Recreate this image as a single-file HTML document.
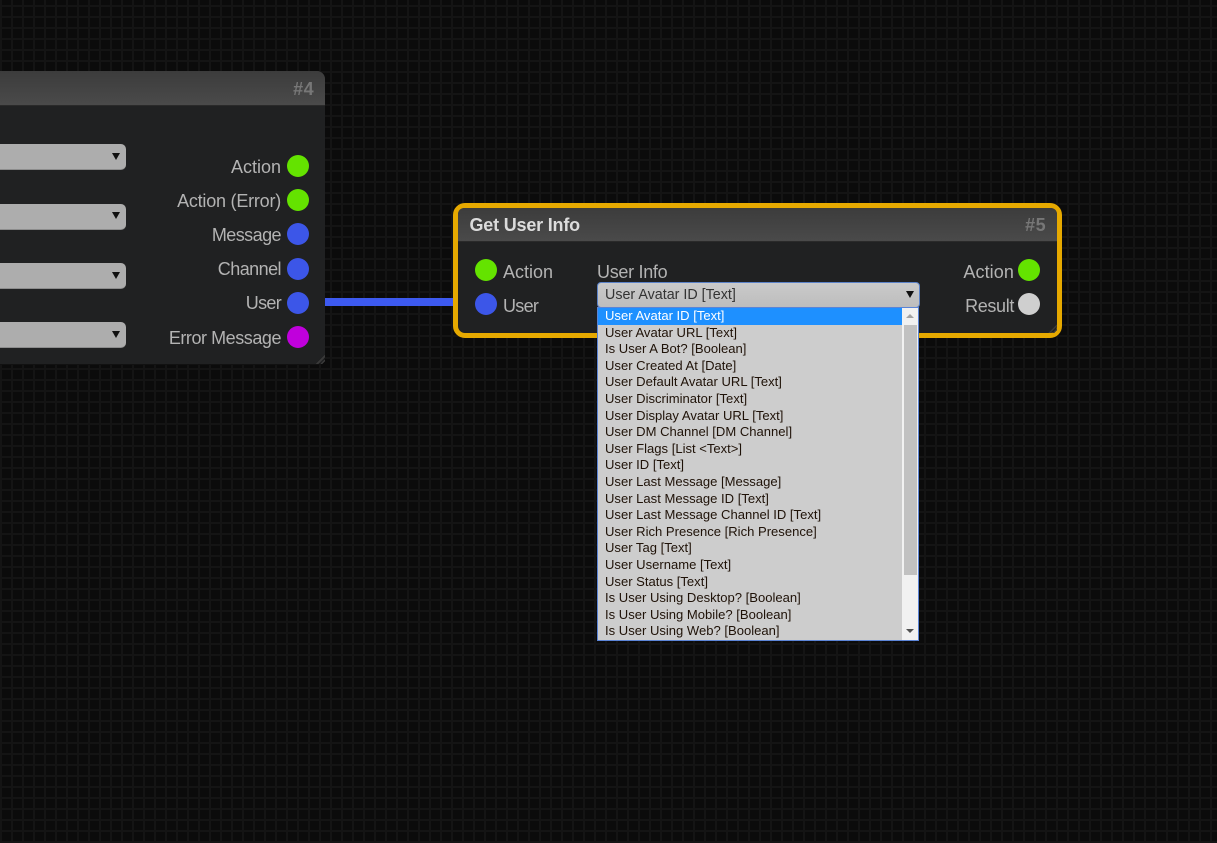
<!DOCTYPE html>
<html><head><meta charset="utf-8"><style>
*{box-sizing:border-box}
html,body{margin:0;padding:0;width:1217px;height:843px;overflow:hidden;background:#0b0b0b}
body{position:relative;font-family:"Liberation Sans",Arial,sans-serif;
background-color:#0b0b0b;
background-image:linear-gradient(90deg,#141414 2px,transparent 2px),linear-gradient(#141414 2px,transparent 2px);
background-size:11px 11px;background-position:0 5px}
.a{position:absolute}
.node{background:#202122;position:absolute}
.hdr{position:absolute;left:0;right:0;top:0;background:linear-gradient(#3c3c3c,#4a4a4a);border-bottom:1px solid #2a2a2a}
.id{position:absolute;font-weight:bold;font-size:18px;color:#777;line-height:20px;letter-spacing:.4px}
.lbl{position:absolute;font-size:18px;color:#b3b3b3;line-height:22px;white-space:nowrap}
.r{text-align:right}
.p{position:absolute;width:22px;height:22px;border-radius:50%}
.g{background:#64e300}.b{background:#3c56e8}.m{background:#c000dc}.w{background:#cfcfcf}
.sel{position:absolute;left:-10px;width:136px;height:26px;background:#adadad;border-bottom:1px solid #8c8c8c;border-radius:0 5px 5px 0}
.arr{position:absolute;width:0;height:0;border-left:4px solid transparent;border-right:4px solid transparent;border-top:7px solid #111}
.it{position:absolute;left:7px;font-size:13.05px;line-height:17px;color:#1f1208;white-space:nowrap}
.grip{position:absolute;width:9px;height:9px;background:linear-gradient(135deg,transparent 50%,#3a3a3a 50%,#3a3a3a 62%,transparent 62%,transparent 74%,#3a3a3a 74%,#3a3a3a 86%,transparent 86%)}
</style></head><body>

<div class="a" style="left:320px;top:298px;width:140px;height:8px;background:#3d5af0"></div>

<div class="node" style="left:-20px;top:71px;width:345px;height:293px;border-radius:0 8px 8px 0;box-shadow:0 1px 0 #111">
 <div class="hdr" style="height:35px;border-radius:0 8px 0 0"></div>
 <div class="id" style="right:11px;top:8px">#4</div>
 <div class="grip" style="right:0;bottom:0"></div>
</div>
<div class="sel" style="top:144px"><div class="arr" style="left:122px;top:9px"></div></div>
<div class="sel" style="top:204px"><div class="arr" style="left:122px;top:8px"></div></div>
<div class="sel" style="top:263px"><div class="arr" style="left:122px;top:9px"></div></div>
<div class="sel" style="top:322px"><div class="arr" style="left:122px;top:9px"></div></div>

<div class="lbl r" style="right:936px;top:156px">Action</div>
<div class="lbl r" style="right:936px;top:190px;letter-spacing:-.22px">Action (Error)</div>
<div class="lbl r" style="right:936px;top:224px;letter-spacing:-.55px">Message</div>
<div class="lbl r" style="right:936px;top:258px;letter-spacing:-.55px">Channel</div>
<div class="lbl r" style="right:936px;top:292px;letter-spacing:-.7px">User</div>
<div class="lbl r" style="right:936px;top:327px;letter-spacing:-.45px">Error Message</div>
<div class="p g" style="left:287px;top:155px"></div>
<div class="p g" style="left:287px;top:189px"></div>
<div class="p b" style="left:287px;top:223px"></div>
<div class="p b" style="left:287px;top:258px"></div>
<div class="p b" style="left:287px;top:292px"></div>
<div class="p m" style="left:287px;top:326px"></div>

<div class="node" style="left:453px;top:203px;width:609px;height:135px;border:5.5px solid #e6a900;border-radius:12px;background:#202122">
 <div class="hdr" style="height:34px;border-radius:6px 6px 0 0"></div>
 <div class="a" style="left:11.5px;top:7px;font-weight:bold;font-size:18px;line-height:20px;color:#dcdcdc;letter-spacing:-.2px">Get User Info</div>
 <div class="id" style="right:11px;top:7px">#5</div>
 <div class="grip" style="right:0;bottom:0"></div>
</div>
<div class="p g" style="left:475px;top:259px"></div>
<div class="p b" style="left:475px;top:293px"></div>
<div class="lbl" style="left:503px;top:261px">Action</div>
<div class="lbl" style="left:503px;top:295px;letter-spacing:-.7px">User</div>
<div class="lbl" style="left:597px;top:261px;letter-spacing:-.3px">User Info</div>
<div class="lbl r" style="right:203px;top:261px;letter-spacing:.1px">Action</div>
<div class="lbl r" style="right:203px;top:295px;letter-spacing:-.35px">Result</div>
<div class="p g" style="left:1018px;top:259px"></div>
<div class="p w" style="left:1018px;top:293px"></div>

<div class="a" style="left:597px;top:282px;width:323px;height:26px;background:linear-gradient(#cacaca,#bdbdbd);border:1px solid #5b82c8;border-radius:4px;font-size:14.3px;line-height:24px;color:#333;padding-left:7px">User Avatar ID [Text]<div class="arr" style="left:308px;top:8px"></div></div>

<div class="a" style="left:597px;top:307px;width:322px;height:334px;background:#cdcdcd;border:1px solid #5b84d6">
 <div class="a" style="left:0;top:0;width:304px;height:17px;background:#1e90ff"></div>
 <div class="a" style="left:304px;top:0;width:16px;height:332px;background:#f1f1f1">
  <div class="a" style="left:2px;top:17px;width:13px;height:250px;background:#c1c1c1"></div>
  <div class="a" style="left:4px;top:6px;width:0;height:0;border-left:4px solid transparent;border-right:4px solid transparent;border-bottom:4px solid #a3a3a3"></div>
  <div class="a" style="left:4px;top:321px;width:0;height:0;border-left:4px solid transparent;border-right:4px solid transparent;border-top:4px solid #505050"></div>
 </div>
 <div class="it" style="top:-1px;color:#fff">User Avatar ID [Text]</div>
 <div class="it" style="top:16px">User Avatar URL [Text]</div>
 <div class="it" style="top:32px">Is User A Bot? [Boolean]</div>
 <div class="it" style="top:49px">User Created At [Date]</div>
 <div class="it" style="top:65px">User Default Avatar URL [Text]</div>
 <div class="it" style="top:82px">User Discriminator [Text]</div>
 <div class="it" style="top:99px">User Display Avatar URL [Text]</div>
 <div class="it" style="top:115px">User DM Channel [DM Channel]</div>
 <div class="it" style="top:132px">User Flags [List &lt;Text&gt;]</div>
 <div class="it" style="top:148px">User ID [Text]</div>
 <div class="it" style="top:165px">User Last Message [Message]</div>
 <div class="it" style="top:182px">User Last Message ID [Text]</div>
 <div class="it" style="top:198px">User Last Message Channel ID [Text]</div>
 <div class="it" style="top:215px">User Rich Presence [Rich Presence]</div>
 <div class="it" style="top:231px">User Tag [Text]</div>
 <div class="it" style="top:248px">User Username [Text]</div>
 <div class="it" style="top:265px">User Status [Text]</div>
 <div class="it" style="top:281px">Is User Using Desktop? [Boolean]</div>
 <div class="it" style="top:298px">Is User Using Mobile? [Boolean]</div>
 <div class="it" style="top:314px">Is User Using Web? [Boolean]</div>
</div>
</body></html>
